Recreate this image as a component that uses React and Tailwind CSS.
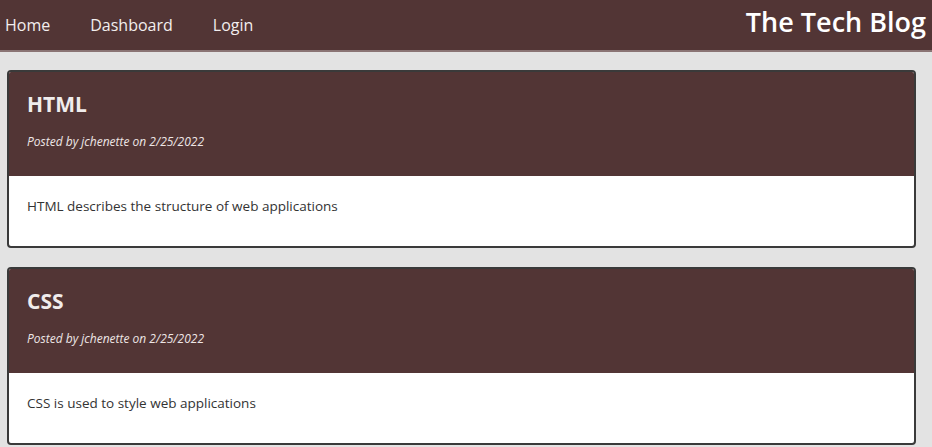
const posts = [
  { title: 'HTML', body: 'HTML describes the structure of web applications' },
  { title: 'CSS', body: 'CSS is used to style web applications' },
];

export default function App() {
  return (
    <div className="min-h-screen bg-[#e3e3e3] font-['Open_Sans',sans-serif]">
      <header className="h-[52px] bg-[#523535] border-b-2 border-[#8a7474] flex items-center justify-between pl-[5px] pr-[6px]">
        <nav className="flex items-center gap-[40px] text-[16px] text-[#f2eeee]">
          <a href="#">Home</a>
          <a href="#">Dashboard</a>
          <a href="#">Login</a>
        </nav>
        <h1 className="text-[27px] font-semibold text-white -mt-[5px]">The Tech Blog</h1>
      </header>

      <main className="px-[7px] pt-[18px] flex flex-col gap-[19px] pr-[16px]">
        {posts.map(post => (
          <article key={post.title} className="border-2 border-[#3a3a3a] rounded-[4px] overflow-hidden bg-white">
            <div className="bg-[#523535] h-[104px] px-[18px] pt-[17px]">
              <h2 className="text-[21px] font-bold text-[#f0ecec] leading-[30px]">{post.title}</h2>
              <p className="mt-[14px] text-[12px] italic text-[#eee6e6] leading-[18px]">
                Posted by jchenette on 2/25/2022
              </p>
            </div>
            <div className="h-[70px] px-[18px] pt-[20px] text-[13.5px] text-[#333]">
              {post.body}
            </div>
          </article>
        ))}
      </main>
    </div>
  );
}
